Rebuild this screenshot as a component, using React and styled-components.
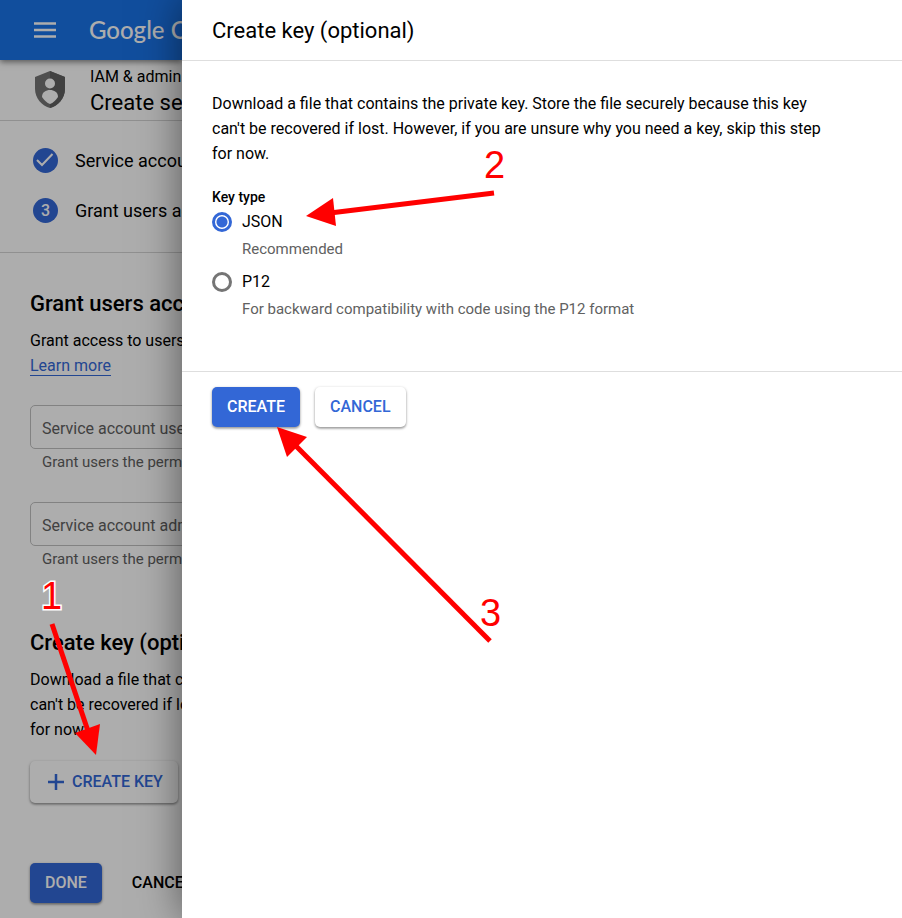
import React from "react";
import styled, { createGlobalStyle, css } from "styled-components";

const GlobalStyle = createGlobalStyle`
  *, *::before, *::after { box-sizing: border-box; }
  body {
    margin: 0;
    background: #fff;
    color: #000;
    font: 16px/25px Roboto, sans-serif;
  }
  button, input { font: inherit; }
  h1, h2, p, ul, ol, fieldset { margin: 0; padding: 0; border: 0; }
  svg { flex: none; }
`;

const Screen = styled.div`
  position: relative;
  display: grid;
  grid-template-columns: 182px minmax(0, 1fr);
  min-height: 100vh;
  overflow: hidden;
`;

const Page = styled.div`
  min-width: 0;
  overflow: hidden;
  white-space: nowrap;
`;

const Backdrop = styled.div`
  position: absolute;
  inset: 0;
  background: rgba(0, 0, 0, 0.32);
`;

const TopBar = styled.header`
  position: relative;
  display: flex;
  align-items: center;
  gap: 32px;
  height: 60px;
  padding-left: 33px;
  background: #1a73e8;
  box-shadow: 0 2px 6px rgba(0, 0, 0, 0.5);
`;

const IconButton = styled.button`
  display: flex;
  padding: 0;
  border: 0;
  background: none;
  color: #fff;
`;

const Brand = styled.div`
  color: #fff;
  font: 500 24px/30px Lato, sans-serif;
`;

const Product = styled.div`
  display: flex;
  align-items: center;
  gap: 24px;
  height: 61px;
  padding-left: 34px;
  border-bottom: 1px solid #d4d4d4;
`;

const Section = styled.div`
  line-height: 26px;
`;

const PageTitle = styled.h1`
  font-size: 22px;
  font-weight: 400;
  line-height: 26px;
`;

const Steps = styled.ol`
  display: flex;
  flex-direction: column;
  gap: 25px;
  padding: 27px 0 29px 33px;
  border-bottom: 1px solid #d4d4d4;
  list-style: none;
`;

const Step = styled.li`
  display: flex;
  align-items: center;
  gap: 17px;
  height: 25px;
  font-size: 18px;
`;

const StepMark = styled.span`
  display: flex;
  flex: none;
  align-items: center;
  justify-content: center;
  width: 25px;
  height: 25px;
  border-radius: 50%;
  background: #3367d6;
  color: #fff;
  font-size: 16px;
  font-weight: 500;
`;

const Content = styled.main`
  width: 680px;
  padding: 36px 30px 15px;
`;

const SectionTitle = styled.h2`
  margin-bottom: 9px;
  font-size: 22px;
  font-weight: 500;
  line-height: 30px;
`;

const Text = styled.p`
  max-width: 628px;
  white-space: normal;
`;

const Link = styled.a`
  display: inline-block;
  height: 23px;
  border-bottom: 1px solid #3367d6;
  color: #3367d6;
  text-decoration: none;
`;

const Fields = styled.div`
  display: flex;
  flex-direction: column;
  gap: 28px;
  margin: 27px 0 57px;
`;

const Field = styled.label`
  display: flex;
  flex-direction: column;
  gap: 2px;
`;

const FieldInput = styled.input`
  height: 44px;
  padding: 3px 11px 0;
  border: 1px solid #c0c0c0;
  border-radius: 5px;
  background: transparent;
  &::placeholder { color: #616161; opacity: 1; }
`;

const Hint = styled.span`
  padding-left: 12px;
  color: #616161;
  font-size: 15px;
  line-height: 23px;
`;

const Button = styled.button`
  display: inline-flex;
  align-items: center;
  gap: 7px;
  height: 40px;
  padding: 0 15px;
  border: 0;
  border-radius: 5px;
  background: #fff;
  color: #3367d6;
  font-weight: 500;
  line-height: 24px;
  box-shadow: 0 1px 3px rgba(0, 0, 0, 0.35), 0 2px 2px rgba(0, 0, 0, 0.15);
  ${(p) => p.$kind === "primary" && css`background: #3367d6; color: #fff;`}
  ${(p) => p.$kind === "plain" && css`background: none; color: #000; box-shadow: none;`}
  ${(p) => p.$icon && css`height: 42px; margin: 19px 0 60px;`}
`;

const Actions = styled.div`
  display: flex;
  gap: 15px;
`;

const Drawer = styled.aside`
  position: relative;
  background: #fff;
  box-shadow: 0 0 40px rgba(0, 0, 0, 0.5);
`;

const DrawerHeader = styled.header`
  display: flex;
  align-items: center;
  height: 61px;
  padding: 0 30px;
  border-bottom: 1px solid #dedede;
`;

const DrawerTitle = styled.h2`
  font-size: 22px;
  font-weight: 400;
`;

const DrawerBody = styled.div`
  padding: 30px 30px 42px;
  border-bottom: 1px solid #dedede;
`;

const KeyTypes = styled.fieldset`
  display: grid;
  grid-template-columns: 20px minmax(0, 1fr);
  column-gap: 10px;
  align-items: center;
  margin-top: 20px;
`;

const Legend = styled.legend`
  padding: 0;
  font-size: 14px;
  font-weight: 500;
  line-height: 23px;
`;

const Radio = styled.input`
  appearance: none;
  width: 20px;
  height: 20px;
  margin: 0;
  border: 3px solid #757575;
  border-radius: 50%;
  &:checked {
    border-color: #3367d6;
    background: radial-gradient(circle, #3367d6 5px, #fff 6px);
  }
`;

const RadioHint = styled.span`
  grid-column: 2;
  padding: 3px 0 7px;
  color: #616161;
  font-size: 15px;
`;

const DrawerActions = styled(Actions)`
  padding: 15px 30px;
`;

const Annotations = styled.svg`
  position: absolute;
  top: 0;
  left: 0;
  pointer-events: none;
  font: 38px "Liberation Sans", sans-serif;
`;

const MenuIcon = () => (
  <svg width="24" height="18" viewBox="0 0 24 18" fill="none" stroke="currentColor" strokeWidth="2.500" aria-hidden="true">
    <path d="M1 2.500h22M1 9h22M1 15.500h22" />
  </svg>
);

const ShieldIcon = () => (
  <svg width="32" height="38" viewBox="0 0 32 38" aria-hidden="true">
    <path d="M16 0 31 6v12c0 9-7 17-15 19C8 35 1 27 1 18V6z" fill="#757575" />
    <path d="M16 0 31 6v12c0 9-7 17-15 19z" fill="#5f5f5f" />
    <circle cx="16" cy="12.500" r="5" fill="#fff" />
    <path d="M8 26c0-5 4-7 8-7s8 2 8 7c-2 3-5 6-8 7-3-1-6-4-8-7z" fill="#fff" />
  </svg>
);

const CheckIcon = () => (
  <svg width="25" height="25" viewBox="0 0 25 25" fill="none" stroke="#fff" strokeWidth="2" aria-hidden="true">
    <path d="m4 12 5 5L19.500 6" />
  </svg>
);

const PlusIcon = () => (
  <svg width="20" height="20" viewBox="0 0 20 20" fill="none" stroke="currentColor" strokeWidth="2.500" aria-hidden="true">
    <path d="M11 2v16M3 10h16" />
  </svg>
);

const keyText =
  "Download a file that contains the private key. Store the file securely because this key can't be recovered if lost. However, if you are unsure why you need a key, skip this step for now.";

const steps = [
  { mark: <CheckIcon />, label: "Service account" },
  { mark: "3", label: "Grant users access" },
];

const fields = ["Service account users role", "Service account admins role"];

const keyTypes = [
  { id: "json", label: "JSON", hint: "Recommended" },
  { id: "p12", label: "P12", hint: "For backward compatibility with code using the P12 format" },
];

const arrows = [
  { line: "M52 624 89 734", head: "96,755 75,733 100,724", label: "1", x: 41, y: 609 },
  { line: "M494 193 330 213", head: "306,216 333,198 336,226", label: "2", x: 484, y: 178 },
  { line: "M490 641 292 442", head: "277,427 307,437 287,457", label: "3", x: 480, y: 626 },
];

export default function App() {
  return (
    <>
      <GlobalStyle />
      <Screen>
        <Page>
          <TopBar>
            <IconButton aria-label="Main menu"><MenuIcon /></IconButton>
            <Brand>Google Cloud</Brand>
          </TopBar>
          <Product>
            <ShieldIcon />
            <Section>
              <div>IAM &amp; admin</div>
              <PageTitle>Create service</PageTitle>
            </Section>
          </Product>
          <Steps>
            {steps.map((s) => (
              <Step key={s.label}><StepMark>{s.mark}</StepMark>{s.label}</Step>
            ))}
          </Steps>
          <Content>
            <SectionTitle>Grant users access</SectionTitle>
            <p>Grant access to users</p>
            <Link href="#learn">Learn more</Link>
            <Fields>
              {fields.map((f) => (
                <Field key={f}>
                  <FieldInput placeholder={f} />
                  <Hint>Grant users the permissions</Hint>
                </Field>
              ))}
            </Fields>
            <SectionTitle>Create key (optional)</SectionTitle>
            <Text>{keyText}</Text>
            <Button $icon><PlusIcon />CREATE KEY</Button>
            <Actions>
              <Button $kind="primary">DONE</Button>
              <Button $kind="plain">CANCEL</Button>
            </Actions>
          </Content>
        </Page>
        <Backdrop />
        <Drawer>
          <DrawerHeader><DrawerTitle>Create key (optional)</DrawerTitle></DrawerHeader>
          <DrawerBody>
            <Text>{keyText}</Text>
            <KeyTypes>
              <Legend>Key type</Legend>
              {keyTypes.map((k, i) => (
                <React.Fragment key={k.id}>
                  <Radio type="radio" name="keyType" id={k.id} defaultChecked={i === 0} />
                  <label htmlFor={k.id}>{k.label}</label>
                  <RadioHint>{k.hint}</RadioHint>
                </React.Fragment>
              ))}
            </KeyTypes>
          </DrawerBody>
          <DrawerActions>
            <Button $kind="primary">CREATE</Button>
            <Button>CANCEL</Button>
          </DrawerActions>
        </Drawer>
        <Annotations width="902" height="918" viewBox="0 0 902 918">
          {arrows.map((a) => (
            <g key={a.label} fill="#f00">
              <path d={a.line} stroke="#f00" strokeWidth="5" />
              <polygon points={a.head} />
              <text x={a.x} y={a.y} stroke="#fff" strokeWidth="3" paintOrder="stroke">{a.label}</text>
            </g>
          ))}
        </Annotations>
      </Screen>
    </>
  );
}
